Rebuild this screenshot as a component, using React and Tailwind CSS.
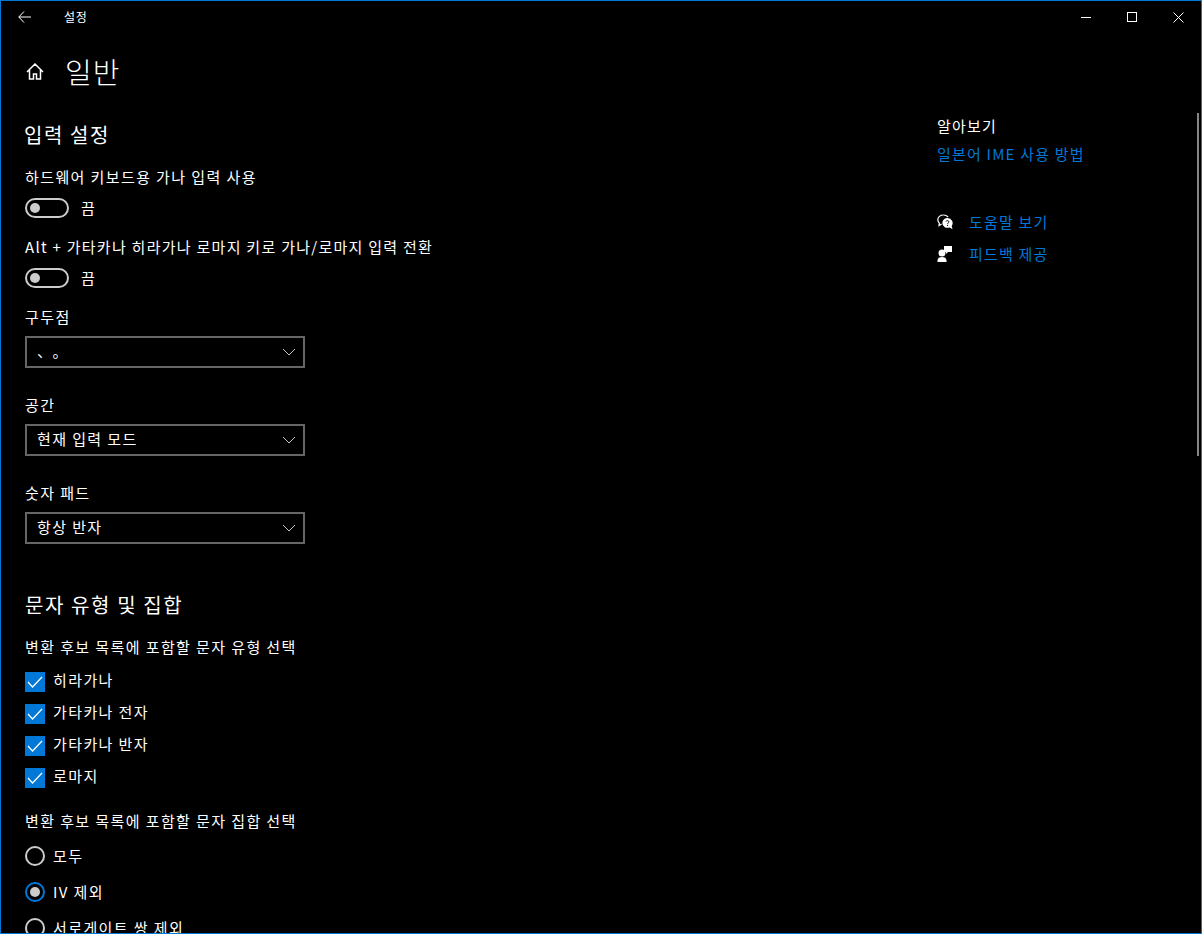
import React from "react";

const font = { fontFamily: '"Noto Sans CJK KR", sans-serif' };

function Toggle({ label }) {
  return (
    <div className="flex items-center h-5 mt-[11px]">
      <div className="w-11 h-5 rounded-full border-2 border-[#cccccc] flex items-center pl-[3px]">
        <div className="w-[10px] h-[10px] rounded-full bg-[#cccccc]" />
      </div>
      <span className="ml-3 text-[15px] leading-5 text-white tracking-[1.4px]">{label}</span>
    </div>
  );
}

function Select({ value, spaced }) {
  return (
    <div className="w-[280px] h-8 mt-[9px] border-2 border-[#666666] flex items-center justify-between pl-[10px] pr-[7px]">
      <span className={`text-[15px] leading-5 text-white -mt-[2px] ${spaced ? "tracking-[8px]" : "tracking-[1.4px]"}`}>{value}</span>
      <svg width="14" height="8" viewBox="0 0 14 8" fill="none" stroke="#c8c8c8" strokeWidth="1">
        <path d="M1 1l6 6 6-6" />
      </svg>
    </div>
  );
}

function Check({ label }) {
  return (
    <div className="flex items-center h-5 mb-3">
      <div className="w-5 h-5 bg-[#0078d7] flex items-center justify-center">
        <svg width="16" height="12" viewBox="0 0 16 12" fill="none" stroke="white" strokeWidth="1.3">
          <path d="M1 6l4.5 5L15 1" />
        </svg>
      </div>
      <span className="ml-2 text-[15px] leading-5 text-white tracking-[1.4px] -mt-[4px]">{label}</span>
    </div>
  );
}

function Radio({ label, on }) {
  return (
    <div className="flex items-center h-5 mb-4">
      <div className={`w-5 h-5 rounded-full border-2 flex items-center justify-center ${on ? "border-[#0078d7]" : "border-[#cccccc]"}`}>
        {on && <div className="w-[10px] h-[10px] rounded-full bg-[#cccccc]" />}
      </div>
      <span className="ml-2 text-[15px] leading-5 text-white tracking-[1.4px]">{label}</span>
    </div>
  );
}

export default function App() {
  return (
    <div style={font} className="relative w-[1202px] h-[934px] overflow-hidden bg-black border border-[#0078d7] text-white">
      {/* title bar */}
      <div className="flex items-center h-[32px]">
        <svg className="ml-[17px]" width="13" height="12" viewBox="0 0 13 12" fill="none" stroke="white" strokeWidth="1">
          <path d="M6 .5L.8 6 6 11.5M.8 6H13" />
        </svg>
        <span className="ml-[33px] text-[12px] leading-4 tracking-[.6px]">설정</span>
        <div className="ml-auto flex items-center">
          <div className="w-[46px] flex justify-center">
            <div className="w-[10px] h-px bg-white" />
          </div>
          <div className="w-[46px] flex justify-center">
            <div className="w-[10px] h-[10px] border border-white" />
          </div>
          <div className="w-[46px] flex justify-center">
            <svg width="11" height="11" viewBox="0 0 11 11" stroke="white" strokeWidth="1">
              <path d="M.5.5l10 10M10.5.5l-10 10" />
            </svg>
          </div>
        </div>
      </div>

      <div className="flex">
        <div className="w-[936px] pl-[24px]">
          {/* header */}
          <div className="flex items-center h-[40px] mt-[18px]">
            <svg className="ml-[1px]" width="18" height="17" viewBox="0 0 18 17" fill="none" stroke="white" strokeWidth="1.5">
              <path d="M1 9l8-8 8 8M3.500 7v9h4v-5h3v5h4V7" />
            </svg>
            <span className="ml-[21px] text-[29px] leading-[40px] font-light tracking-[1px]">일반</span>
          </div>

          <h2 className="mt-[30px] text-[20px] leading-7 font-normal tracking-[1.6px] -ml-px">입력 설정</h2>
          <p className="mt-[18px] text-[15px] leading-5 tracking-[1.4px]">하드웨어 키보드용 가나 입력 사용</p>
          <Toggle label="끔" />
          <p className="mt-[19px] text-[15px] leading-5 tracking-[1.27px]">Alt + 가타카나 히라가나 로마지 키로 가나/로마지 입력 전환</p>
          <Toggle label="끔" />
          <p className="mt-[19px] text-[15px] leading-5 tracking-[1.4px]">구두점</p>
          <Select value="、。" spaced />
          <p className="mt-[27px] text-[15px] leading-5 tracking-[1.4px]">공간</p>
          <Select value="현재 입력 모드" />
          <p className="mt-[27px] text-[15px] leading-5 tracking-[1.4px]">숫자 패드</p>
          <Select value="항상 반자" />

          <h2 className="mt-[47px] text-[20px] leading-7 font-normal tracking-[1.6px]">문자 유형 및 집합</h2>
          <p className="mt-[18px] mb-[15px] text-[15px] leading-5 tracking-[1.4px]">변환 후보 목록에 포함할 문자 유형 선택</p>
          <Check label="히라가나" />
          <Check label="가타카나 전자" />
          <Check label="가타카나 반자" />
          <Check label="로마지" />
          <p className="mt-[23px] mb-[15px] text-[15px] leading-5 tracking-[1.4px]">변환 후보 목록에 포함할 문자 집합 선택</p>
          <Radio label="모두" />
          <Radio label="IV 제외" on />
          <Radio label="서로게이트 쌍 제외" />
        </div>

        {/* related links */}
        <aside className="pt-[83px] text-[15px] leading-5 tracking-[1.2px]">
          <p>알아보기</p>
          <p className="mt-2 text-[#0078d7]">일본어 IME 사용 방법</p>
          <div className="flex items-center mt-[48px] text-[#0078d7]">
            <svg className="w-4 h-4" viewBox="0 0 16 16" fill="none">
              <path d="M6.500 1C3.300 1 .8 3 .8 5.800c0 1.400.6 2.500 1.600 3.300L2 11.500l2.600-1.600" stroke="white" strokeWidth="1.2" />
              <path d="M6.500 1c2 0 3.600.8 4.600 2.200" stroke="white" strokeWidth="1.2" />
              <path d="M10.500 4a5 5 0 0 0-2.800 9.200c1.500.7 3.300.8 4.900.3l2.900 1.700-.8-3.300A5 5 0 0 0 10.500 4z" fill="white" />
              <path d="M9 7.500c.2-1.100 2.800-1.300 2.900.3.100 1-1.300 1-1.300 2.100M10.600 10.800V12" stroke="black" strokeWidth="1" />
            </svg>
            <span className="ml-4">도움말 보기</span>
          </div>
          <div className="flex items-center mt-3 text-[#0078d7]">
            <svg className="w-4 h-4" viewBox="0 0 16 16" fill="white">
              <circle cx="5" cy="7" r="3.500" />
              <path d="M.5 16v-1.500C.5 12 2.500 11 5 11s4.500 1 4.500 3.500V16z" />
              <path d="M7 0h8v6h-4l-2 2V6H7z" />
            </svg>
            <span className="ml-4">피드백 제공</span>
          </div>
        </aside>
      </div>

      {/* scrollbar */}
      <div className="absolute right-[2px] top-[112px] w-[2px] h-[343px] bg-[#858585]" />
    </div>
  );
}
